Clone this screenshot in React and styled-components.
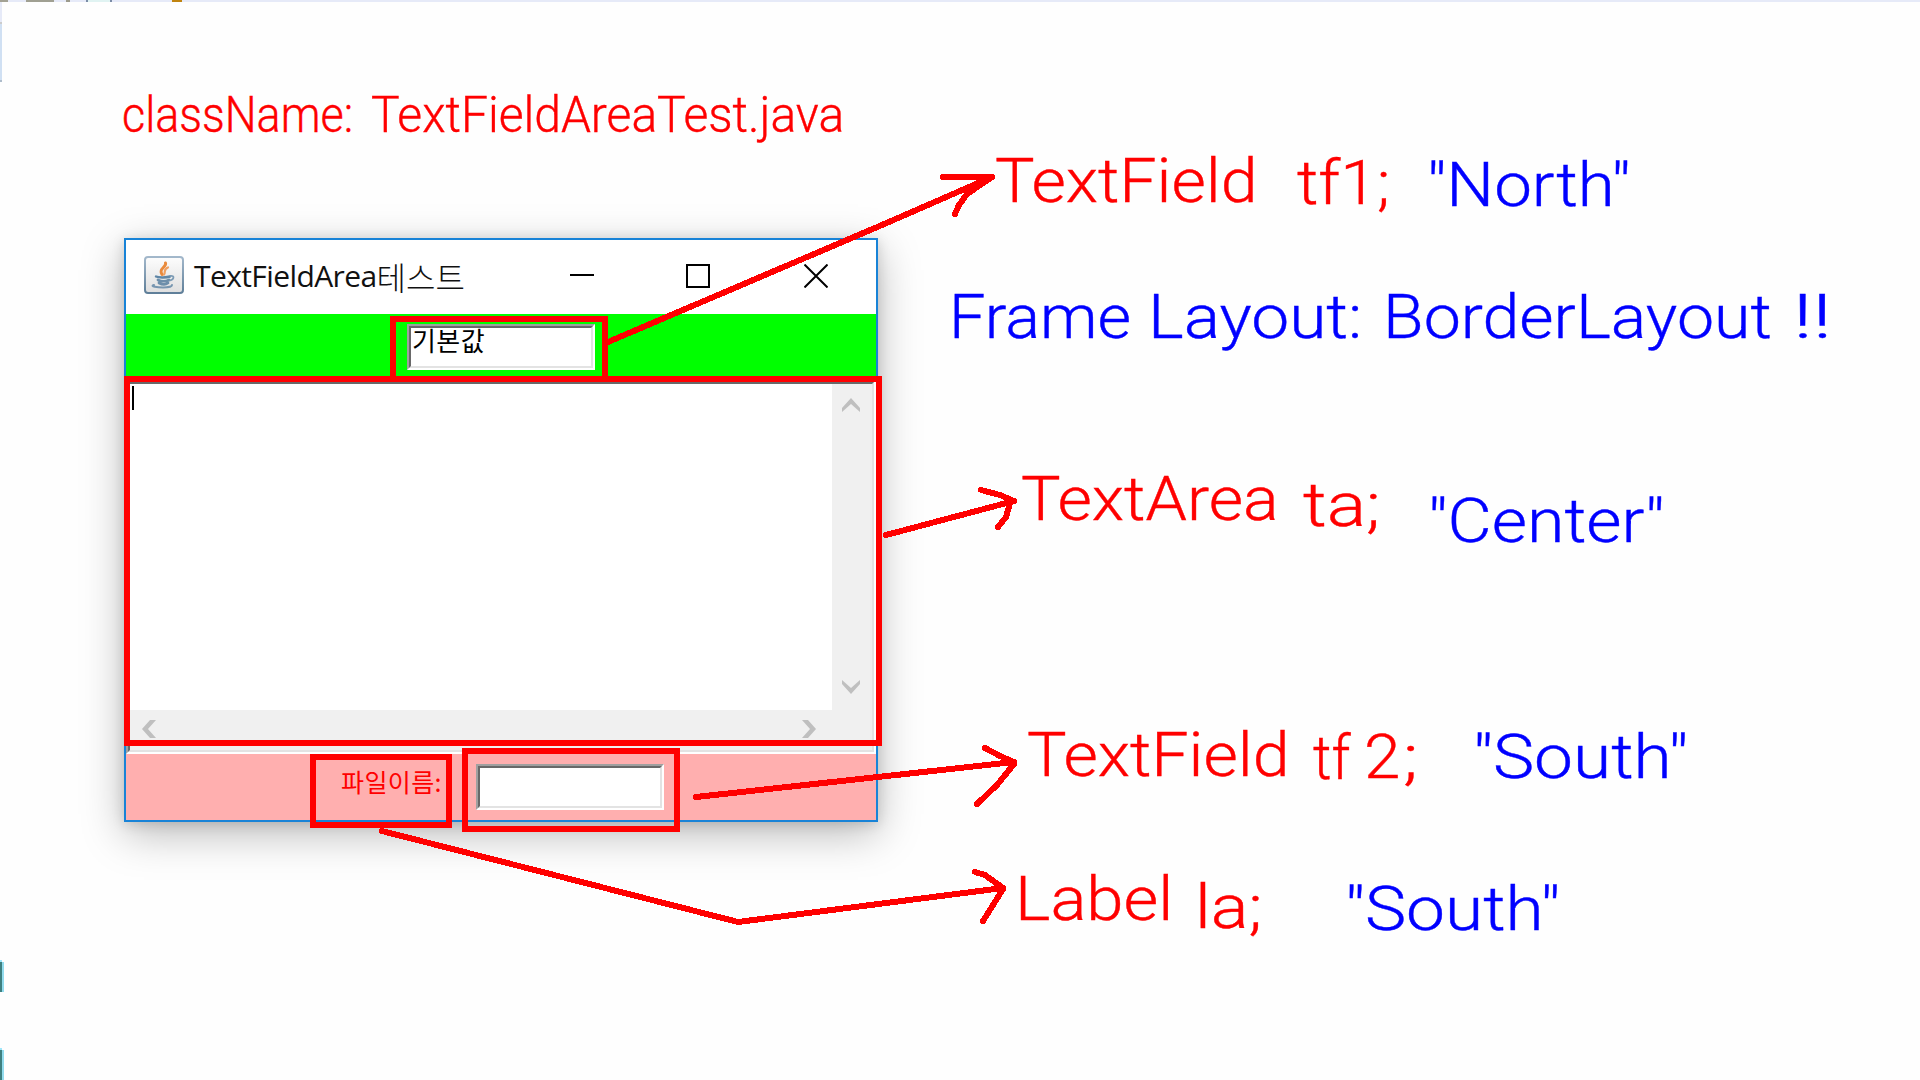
import React, { useLayoutEffect, useRef, useState } from "react";
import styled, { createGlobalStyle } from "styled-components";

const GlobalStyle = createGlobalStyle`
  * { box-sizing: border-box; }
  body { margin: 0; background: #fefefe; overflow: hidden; }
`;

const Canvas = styled.main`
  position: relative;
  width: 1920px;
  height: 1080px;
  overflow: hidden;
  background: #fefefe;
`;

const TopStrip = styled.div`
  display: flex;
  height: 2px;
  background: #e6eaf8;
`;

const Sliver = styled.i`
  width: ${(p) => p.$w}px;
  height: ${(p) => p.$h || 2}px;
  margin-left: ${(p) => p.$gap || 0}px;
  margin-top: ${(p) => p.$drop || 0}px;
  background: ${(p) => p.$c};
`;

const SideStrip = styled.div`
  display: flex;
  flex-direction: column;
  width: 4px;
`;

const TealEdge = styled.i`
  width: 4px;
  height: 30px;
  background: linear-gradient(90deg, #3f8080 2px, #92dcee 2px);
`;

const Frame = styled.section`
  position: absolute;
  left: 124px;
  top: 238px;
  width: 754px;
  height: 584px;
  display: flex;
  flex-direction: column;
  border: 2px solid #1883d7;
  background: #fff;
  box-shadow: 0 12px 40px rgba(0, 0, 0, 0.27), 0 2px 12px rgba(0, 0, 0, 0.14);
`;

const TitleBar = styled.header`
  display: flex;
  align-items: center;
  height: 74px;
  padding: 0 48px 2px 18px;
`;

const IconSlot = styled.span`
  display: flex;
  padding-bottom: 2px;
`;

const Title = styled.h1`
  flex: 1;
  display: flex;
  align-items: center;
  margin: 0 0 0 10px;
  font: 400 30px/40px "Open Sans", "Noto Sans CJK KR", sans-serif;
  letter-spacing: -0.6px;
  color: #111;
  white-space: pre;
`;

const Hangul = styled.span`
  font-family: "Noto Sans CJK KR", sans-serif;
  font-weight: 300;
  font-size: 32px;
  letter-spacing: 0;
`;

const Controls = styled.div`
  display: flex;
  align-items: center;
  gap: 92px;

  & > :last-child {
    margin-left: 2px;
  }
`;

const North = styled.div`
  display: flex;
  justify-content: center;
  align-items: flex-start;
  height: 66px;
  padding-top: 10px;
  background: #00ff00;
`;

const South = styled.div`
  display: flex;
  justify-content: center;
  align-items: flex-start;
  gap: 10px;
  height: 66px;
  padding-top: 10px;
  background: #ffafaf;
`;

const Sunken = styled.div`
  border: 2px solid;
  border-color: #a0a0a0 #fff #fff #a0a0a0;
`;

const SunkenInner = styled.div`
  width: 100%;
  height: 100%;
  border: 2px solid;
  border-color: #696969 #e3e3e3 #e3e3e3 #696969;
  background: #fff;
`;

const FieldBox = styled(Sunken)`
  width: 188px;
  height: 46px;
`;

const FieldText = styled.div`
  padding-left: 1px;
  font: 400 26px/23px "Noto Sans CJK KR", sans-serif;
  letter-spacing: 0.4px;
  color: #000;
`;

const FileLabel = styled.div`
  width: 128px;
  padding-left: 3px;
  font: 400 25px/35px "Noto Sans CJK KR", sans-serif;
  letter-spacing: 0.4px;
  color: #ff0000;
  white-space: nowrap;
`;

const AreaBox = styled(Sunken)`
  height: 374px;
`;

const AreaInner = styled(SunkenInner)`
  display: grid;
  grid-template-columns: 1fr 40px;
  grid-template-rows: 1fr 40px;
`;

const Editor = styled.div`
  padding: 2px;
  background: #fff;
`;

const Caret = styled.div`
  width: 2px;
  height: 24px;
  background: #000;
`;

const VScroll = styled.div`
  display: flex;
  flex-direction: column;
  justify-content: space-between;
  align-items: center;
  padding: 14px 2px 16px 0;
  background: #f0f0f0;
`;

const HScroll = styled.div`
  display: flex;
  justify-content: space-between;
  align-items: flex-start;
  padding: 10px 16px 0 12px;
  background: #f0f0f0;
`;

const Corner = styled.div`
  background: #f0f0f0;
`;

const Marks = styled.svg`
  position: absolute;
  left: 0;
  top: 0;
`;

const Highlight = styled.div`
  position: absolute;
  left: ${(p) => p.$x}px;
  top: ${(p) => p.$y}px;
  width: ${(p) => p.$w}px;
  height: ${(p) => p.$h}px;
  border: 6px solid #ff0000;
`;

const NoteText = styled.span`
  position: absolute;
  left: ${(p) => p.$x}px;
  top: ${(p) => p.$baseline - p.$size * 0.842}px;
  font: 300 ${(p) => p.$size}px/1 Roboto, sans-serif;
  -webkit-text-stroke: 0.4px ${(p) => p.$color};
  color: ${(p) => p.$color};
  white-space: pre;
  transform-origin: 0 0;
`;

function Note({ x, width, baseline, size = 62, color = "#ff0000", children }) {
  const ref = useRef(null);
  const [stretch, setStretch] = useState(1);
  useLayoutEffect(() => {
    setStretch(width / ref.current.offsetWidth);
  }, [width, children]);
  return (
    <NoteText
      ref={ref}
      $x={x}
      $baseline={baseline}
      $size={size}
      $color={color}
      style={{ transform: `scaleX(${stretch})` }}
    >
      {children}
    </NoteText>
  );
}

const BLUE = "#0000ff";

const notes = [
  { text: "className:", x: 122, width: 231, baseline: 133, size: 50.5 },
  { text: "TextFieldAreaTest.java", x: 371, width: 473, baseline: 133, size: 50.5 },
  { text: "TextField", x: 995, width: 262, baseline: 202 },
  { text: "tf1;", x: 1297, width: 93, baseline: 204 },
  { text: '"North"', x: 1427, width: 204, baseline: 206, color: BLUE },
  { text: "Frame", x: 949, width: 182, baseline: 338, color: BLUE },
  { text: "Layout:", x: 1148, width: 214, baseline: 338, color: BLUE },
  { text: "BorderLayout", x: 1383, width: 389, baseline: 338, color: BLUE },
  { text: "!!", x: 1793, width: 39, baseline: 338, color: BLUE },
  { text: "TextArea", x: 1021, width: 258, baseline: 520 },
  { text: "ta;", x: 1303, width: 77, baseline: 526 },
  { text: '"Center"', x: 1428, width: 236, baseline: 542, color: BLUE },
  { text: "TextField", x: 1027, width: 262, baseline: 776 },
  { text: "tf", x: 1313, width: 38, baseline: 779 },
  { text: "2", x: 1364, width: 36, baseline: 778 },
  { text: ";", x: 1403, width: 15, baseline: 778 },
  { text: '"South"', x: 1473, width: 215, baseline: 778, color: BLUE },
  { text: "Label", x: 1015, width: 158, baseline: 920 },
  { text: "la;", x: 1195, width: 67, baseline: 928 },
  { text: '"South"', x: 1345, width: 215, baseline: 930, color: BLUE },
];

const highlights = [
  { x: 390, y: 316, w: 218, h: 66 },
  { x: 124, y: 376, w: 758, h: 370 },
  { x: 310, y: 754, w: 142, h: 74 },
  { x: 462, y: 748, w: 218, h: 84 },
];

const strokes = [
  "M608 342 L882 225 L992 177 M943 177 H992 M955 214 L959 205 L967 194 L992 177",
  "M886 535 L1014 501 M981 490 L1000 495 L1014 501 M998 527 L1006 517 L1010 503",
  "M696 797 L1014 762 M985 748 L1000 756 L1014 762 M977 804 L997 785 L1014 764",
  "M382 831 L738 922 L1003 888 M975 872 L985 875 L1003 888 M983 921 L1003 889",
];

function JavaIcon() {
  return (
    <svg width="40" height="38" viewBox="0 0 40 38">
      <defs>
        <linearGradient id="plate" x1="0" y1="0" x2="0" y2="1">
          <stop offset="0" stopColor="#fdfdfd" />
          <stop offset="1" stopColor="#dfdfdf" />
        </linearGradient>
        <linearGradient id="rim" x1="0" y1="0" x2="0" y2="1">
          <stop offset="0" stopColor="#a3b8cb" />
          <stop offset="1" stopColor="#5f7f99" />
        </linearGradient>
      </defs>
      <rect x="1" y="1" width="38" height="36" rx="3" fill="url(#plate)" stroke="url(#rim)" strokeWidth="2" />
      <g fill="none" strokeLinecap="round">
        <path d="M21.500 7 C23 11 14 12.500 18 18.500" stroke="#e98a3c" strokeWidth="3" />
        <path d="M24 11.500 C19 13.500 22 15.500 20 18.500" stroke="#f0a061" strokeWidth="2.200" />
        <path d="M12 20.500 C15 22 23 21.500 26 20.500" stroke="#5f86a6" strokeWidth="2.400" />
        <path d="M14 24 C17 25.500 22 25.500 25 24 M15 27 C18 28.500 22 28.500 24 27" stroke="#6d8fab" strokeWidth="2.800" />
        <path d="M26.500 20 C31 19.500 30 23.500 26 24.500" stroke="#7d9cb5" strokeWidth="1.800" />
        <path d="M10 29 C5 30.500 14 31.500 19 31.500 C24 31.500 28 30.500 28 29" stroke="#7796b0" strokeWidth="2" />
      </g>
    </svg>
  );
}

const chevrons = {
  up: [18, 14, "M0 14 V10 L9 0 L18 10 V14 L9 6 Z"],
  down: [18, 14, "M0 0 V4 L9 14 L18 4 V0 L9 8 Z"],
  left: [14, 18, "M14 0 H8 L0 9 L8 18 H14 L6 9 Z"],
  right: [14, 18, "M0 0 H6 L14 9 L6 18 H0 L8 9 Z"],
};

function Chevron({ dir }) {
  const [w, h, d] = chevrons[dir];
  return (
    <svg width={w} height={h}>
      <path d={d} fill="#bfbfbf" />
    </svg>
  );
}

function Glyph({ d }) {
  return (
    <svg width="24" height="24">
      <path d={d} fill="none" stroke="#000" strokeWidth="2" />
    </svg>
  );
}

export default function App() {
  return (
    <Canvas>
      <GlobalStyle />
      <TopStrip>
        <Sliver $w={8} $c="#a3a294" />
        <Sliver $w={28} $gap={18} $c="#a0a092" />
        <Sliver $w={4} $gap={12} $c="#9c9a8c" />
        <Sliver $w={2} $gap={16} $c="#7b8ca6" />
        <Sliver $w={22} $c="#e0f3f2" />
        <Sliver $w={2} $c="#7b8ca6" />
        <Sliver $w={10} $gap={60} $c="#c08410" />
      </TopStrip>
      <SideStrip>
        <Sliver $w={2} $h={20} $c="#e6eaf8" />
        <Sliver $w={2} $h={2} $c="#cccccc" />
        <Sliver $w={2} $h={56} $c="#d0e0f3" />
        <Sliver $w={2} $h={2} $c="#aebccb" />
        <Sliver $w={2} $h={2} $drop={878} $c="#a0e6fa" />
        <TealEdge />
        <Sliver $w={2} $h={2} $drop={56} $c="#a0e6fa" />
        <TealEdge />
      </SideStrip>

      <Frame>
        <TitleBar>
          <IconSlot>
            <JavaIcon />
          </IconSlot>
          <Title>
            TextFieldArea<Hangul>테스트</Hangul>
          </Title>
          <Controls>
            <Glyph d="M0 11 H24" />
            <Glyph d="M1 1 H23 V23 H1 Z" />
            <Glyph d="M0.500 0.500 L23.500 23.500 M23.500 0.500 L0.500 23.500" />
          </Controls>
        </TitleBar>
        <North>
          <FieldBox>
            <SunkenInner>
              <FieldText>기본값</FieldText>
            </SunkenInner>
          </FieldBox>
        </North>
        <AreaBox>
          <AreaInner>
            <Editor>
              <Caret />
            </Editor>
            <VScroll>
              <Chevron dir="up" />
              <Chevron dir="down" />
            </VScroll>
            <HScroll>
              <Chevron dir="left" />
              <Chevron dir="right" />
            </HScroll>
            <Corner />
          </AreaInner>
        </AreaBox>
        <South>
          <FileLabel>파일이름:</FileLabel>
          <FieldBox>
            <SunkenInner />
          </FieldBox>
        </South>
      </Frame>

      {highlights.map((h) => (
        <Highlight key={`${h.x}-${h.y}`} $x={h.x} $y={h.y} $w={h.w} $h={h.h} />
      ))}
      <Marks width="1920" height="1080" fill="none" stroke="#ff0000" strokeWidth="6" strokeLinejoin="round" strokeLinecap="round" shapeRendering="crispEdges">
        {strokes.map((d) => (
          <path key={d} d={d} />
        ))}
      </Marks>
      {notes.map(({ text, ...n }) => (
        <Note key={`${n.x}-${n.baseline}`} {...n}>
          {text}
        </Note>
      ))}
    </Canvas>
  );
}
